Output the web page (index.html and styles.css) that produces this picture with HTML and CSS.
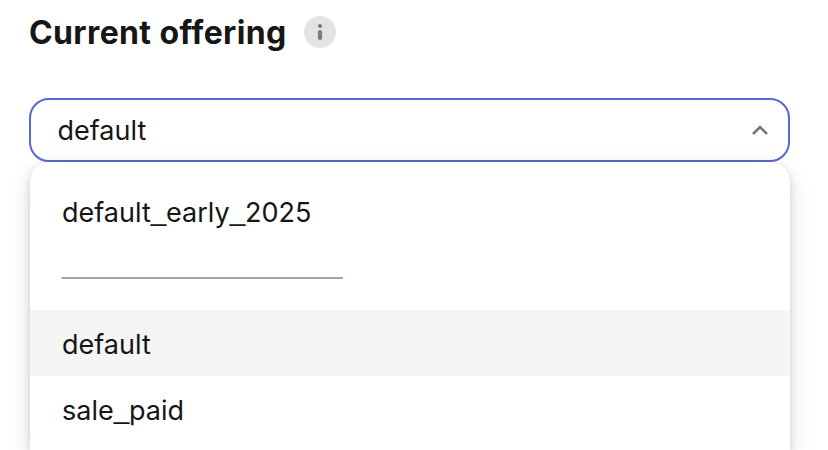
FILE: index.html
```html
<!DOCTYPE html>
<html lang="en">
<head>
<meta charset="utf-8">
<title>Current offering</title>
<link rel="stylesheet" href="styles.css">
</head>
<body>
<main class="field">
  <header class="heading">
    <h1 class="title">Current offering</h1>
    <span class="info"><svg width="32" height="32" viewBox="0 0 32 32"><circle cx="16" cy="10" r="2.1"/><rect x="13.9" y="14" width="4.2" height="10" rx="2.1"/></svg></span>
  </header>
  <div class="select">
    <span class="value">default</span>
    <svg class="chevron" width="18" height="12" viewBox="0 0 18 12"><path d="M2 10 9 3l7 7"/></svg>
  </div>
  <ul class="menu">
    <li class="option">default<span class="underscore">_</span>early<span class="underscore">_</span>2025</li>
    <li class="option divider">_________________</li>
    <li class="option selected">default</li>
    <li class="option">sale<span class="underscore">_</span>paid</li>
  </ul>
</main>
</body>
</html>
```
FILE: styles.css
```css
* { box-sizing: border-box; }
html { overflow: hidden; }
body { margin: 0; height: 450px; overflow: hidden; background: #fff; color: #161616; font-family: Inter, sans-serif; font-size: 27px; }
.field { height: 450px; padding: 0 38px 0 29px; }
.heading { display: flex; align-items: center; height: 64px; }
.title { width: 275px; margin: 0; padding-top: 2px; font-size: 32px; font-weight: 700; line-height: 62px; letter-spacing: .38px; white-space: nowrap; }
.info { width: 32px; height: 32px; border-radius: 50%; background: #e3e3e3; fill: #7a7a7a; }
.info svg { display: block; }
.select { display: flex; align-items: center; justify-content: space-between; height: 64px; margin-top: 34px; padding: 0 19px 0 26.5px; border: 2px solid #5969d3; border-radius: 20px; }
.chevron { fill: none; stroke: #777; stroke-width: 2.6; }
.menu { list-style: none; height: 288px; margin: 0 0 0 1px; width: 760px; padding: 16px 0 0; background: #fff; border-radius: 20px 20px 0 0; box-shadow: 0 8px 24px rgba(0,0,0,.11), 0 3px 8px rgba(0,0,0,.14); }
.option { height: 66px; padding: 2px 32px 0; line-height: 66px; }
.underscore { font-family: "Liberation Sans", sans-serif; font-size: 28px; line-height: 0; letter-spacing: -.3px; vertical-align: 2px; }
.divider { padding-top: 0; color: #a3a3a3; font-family: "Liberation Sans", sans-serif; font-size: 30px; letter-spacing: -.2px; line-height: 38px; }
.selected { background: #f5f5f5; }
```
